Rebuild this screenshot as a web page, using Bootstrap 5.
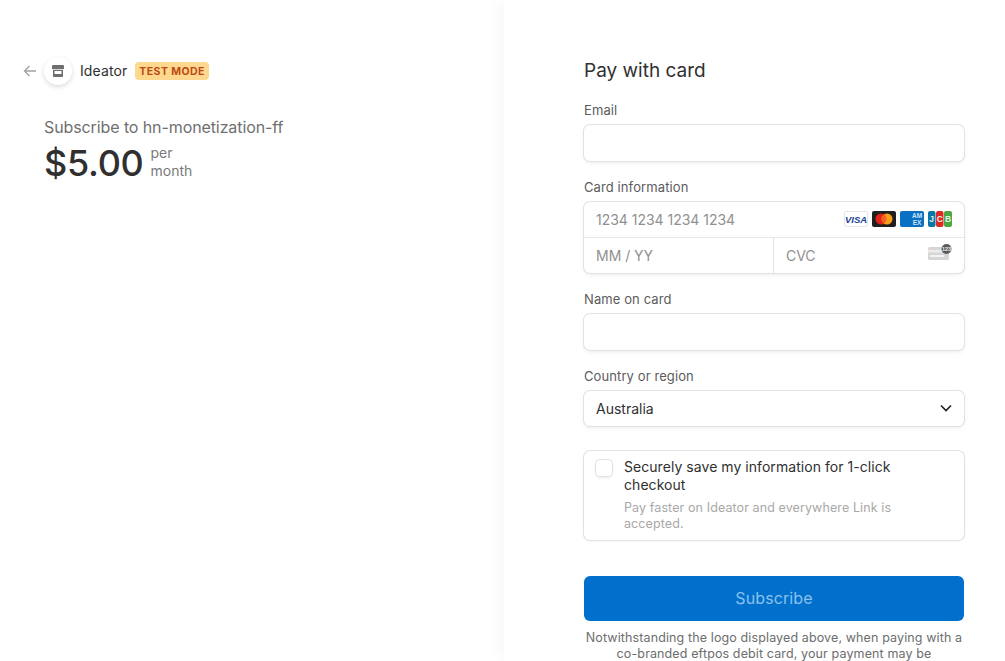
<!DOCTYPE html>
<html lang="en">
<head>
  <meta charset="UTF-8">
  <meta name="viewport" content="width=device-width, initial-scale=1">
  <title>Subscribe to hn-monetization-ff</title>
  <link href="https://cdn.jsdelivr.net/npm/bootstrap@5.3.3/dist/css/bootstrap.min.css" rel="stylesheet">
  <style>
    html, body { height: 100%; }
    body { font-family: Inter, "Liberation Sans", sans-serif; color: #303030; background: #fff; overflow: hidden; }
    .page-wrap { height: 661px; overflow: hidden; }
    .summary-pane { width: 504px; flex: none; padding: 57px 0 0 23px; }
    .form-pane { flex: 1; padding: 59px 41px 0 80px; box-shadow: -10px 0 14px -4px rgba(0,0,0,.035); background: #fff; }
    .back-arrow { width: 14px; height: 14px; margin-right: 7px; }
    .logo-circle { width: 28px; height: 28px; border-radius: 50%; background: #fff; box-shadow: 0 2px 5px rgba(0,0,0,.14); margin-right: 8px; }
    .merchant-name { font-size: 14px; font-weight: 400; letter-spacing: .1px; line-height: 20px; margin-right: 8px; }
    .test-tag { background: #ffd88f; color: #bb4a12; font-size: 10.5px; font-weight: 700; letter-spacing: .45px; line-height: 19px; height: 18px; padding: 0 4px; border-radius: 4px; }
    .plan-block { padding: 32px 0 0 21px; }
    .plan-name { font-size: 16px; font-weight: 400; letter-spacing: -.1px; line-height: 20px; color: #6f6f6f; }
    .plan-row { margin-top: 4px; }
    .plan-price { font-size: 36px; font-weight: 500; line-height: 44px; letter-spacing: -.3px; margin-right: 7px; }
    .plan-term { font-size: 14px; font-weight: 400; line-height: 18px; color: #7a7a7a; margin-bottom: 2px; }
    .form-title { font-size: 19px; font-weight: 400; line-height: 24px; margin: 0 0 19px; }
    .field-label { display: block; font-size: 13px; font-weight: 400; letter-spacing: .1px; line-height: 16px; color: #5c5c5c; margin-bottom: 7px; }
    .field-group { margin-bottom: 18px; }
    .stripe-input { height: 35.67px; width: 100%; background: #fff; border: 0; border-radius: 6px; box-shadow: 0 0 0 1px #e2e2e2, 0 2px 4px rgba(0,0,0,.08); padding: 0 12px; font-size: 14px; color: #303030; display: flex; align-items: center; }
    .card-box { height: 71.33px; border-radius: 6px; box-shadow: 0 0 0 1px #e2e2e2, 0 2px 4px rgba(0,0,0,.08); }
    .card-row { height: 36px; border-bottom: 1px solid #e8e8e8; padding: 0 12px; }
    .card-half { height: 35.33px; padding: 0 12px; width: 50%; }
    .card-half:first-child { width: 189px; flex: none; }
    .card-half + .card-half { border-left: 1px solid #e2e2e2; flex: 1; }
    .hint-text { font-size: 14px; color: #909090; letter-spacing: -.02px; }
    .brand-list { gap: 4px; }
    .brand-list svg { display: block; }
    .cvc-icon { margin-bottom: 5px; }
    .select-chevron { width: 12px; height: 8px; }
    .save-box { height: 89px; margin-top: 24.67px; border-radius: 6px; box-shadow: 0 0 0 1px #e2e2e2, 0 1px 3px rgba(0,0,0,.08); padding: 7px 12px; }
    .fake-check { width: 16px; height: 16px; flex: none; border-radius: 4px; background: #fff; box-shadow: 0 0 0 1px #e2e2e2, 0 2px 3px rgba(0,0,0,.08); margin: 2px 12px 0 0; }
    .save-title { font-size: 14px; font-weight: 400; letter-spacing: .05px; line-height: 18px; color: #303030; }
    .save-desc { font-size: 12.5px; line-height: 16px; color: #a8a8a8; margin-top: 6px; letter-spacing: .1px; }
    .subscribe-btn { display: block; width: 100%; height: 44.67px; margin-top: 36px; background: #0070cc; border: 0; border-radius: 6px; color: #8cc0ee; font-size: 16px; font-weight: 400; letter-spacing: .1px; }
    .legal-text { font-size: 12.5px; line-height: 16px; color: #6d6d6d; text-align: center; margin-top: 9px; letter-spacing: .12px; white-space: nowrap; }
  </style>
</head>
<body>
  <div class="page-wrap d-flex">
    <div class="summary-pane">
      <div class="d-flex align-items-center">
        <svg class="back-arrow" viewBox="0 0 14 14" fill="none" stroke="#a3a3a3" stroke-width="1.4"><path d="M13 7H1.5M6.5 2 1.5 7l5 5"/></svg>
        <div class="logo-circle d-flex align-items-center justify-content-center">
          <svg width="12" height="12" viewBox="0 0 12 12"><path d="M0 1.2C0 .5.5 0 1.2 0h9.6c.7 0 1.2.5 1.2 1.2V4H0z" fill="#6f6f6f"/><path d="M1 4.8h10V11c0 .6-.4 1-1 1H2c-.6 0-1-.4-1-1zM2.5 6v3h7V6z" fill="#6f6f6f" fill-rule="evenodd"/></svg>
        </div>
        <span class="merchant-name">Ideator</span>
        <span class="test-tag">TEST MODE</span>
      </div>
      <div class="plan-block">
        <div class="plan-name">Subscribe to hn-monetization-ff</div>
        <div class="plan-row d-flex align-items-center">
          <span class="plan-price">$5.00</span>
          <span class="plan-term">per<br>month</span>
        </div>
      </div>
    </div>
    <div class="form-pane">
      <h1 class="form-title">Pay with card</h1>

      <div class="field-group">
        <label class="field-label">Email</label>
        <input type="email" class="stripe-input">
      </div>

      <div class="field-group">
        <label class="field-label">Card information</label>
        <div class="card-box">
          <div class="card-row d-flex align-items-center justify-content-between">
            <span class="hint-text">1234 1234 1234 1234</span>
            <div class="brand-list d-flex align-items-center">
              <svg width="24" height="16" viewBox="0 0 24 16"><rect x=".5" y=".5" width="23" height="15" rx="1.5" fill="#fff" stroke="#e6e6e6"/><text x="12" y="11.5" text-anchor="middle" font-family="Liberation Sans" font-size="9.5" font-weight="700" font-style="italic" fill="#1a3f95">VISA</text></svg>
              <svg width="24" height="16" viewBox="0 0 24 16"><rect width="24" height="16" rx="2" fill="#1f1f1f"/><circle cx="9" cy="8" r="5.5" fill="#e2231a"/><circle cx="15" cy="8" r="5.5" fill="#f79e1b"/><path d="M12 3.4a5.500 5.500 0 0 1 0 9.200 5.500 5.500 0 0 1 0-9.200z" fill="#f26122"/></svg>
              <svg width="24" height="16" viewBox="0 0 24 16"><rect width="24" height="16" rx="2" fill="#0a70c4"/><text x="17" y="7.2" text-anchor="middle" font-family="Liberation Sans" font-size="6.500" font-weight="700" fill="#cfe4f6">AM</text><text x="17" y="13.500" text-anchor="middle" font-family="Liberation Sans" font-size="6.500" font-weight="700" fill="#cfe4f6">EX</text></svg>
              <svg width="24" height="16" viewBox="0 0 24 16" font-family="Liberation Sans" font-size="8.500" font-weight="700" fill="#e4f1ea" text-anchor="middle"><rect x="0" width="7.500" height="16" rx="2" fill="#0b74a8"/><rect x="8" width="7.500" height="16" rx="2" fill="#dd2a22"/><rect x="16" width="8" height="16" rx="2" fill="#4aa843"/><text x="3.700" y="11">J</text><text x="11.700" y="11">C</text><text x="20" y="11">B</text></svg>
            </div>
          </div>
          <div class="d-flex">
            <div class="card-half d-flex align-items-center"><span class="hint-text">MM / YY</span></div>
            <div class="card-half d-flex align-items-center justify-content-between">
              <span class="hint-text">CVC</span>
              <svg class="cvc-icon" width="24" height="17" viewBox="0 0 24 17"><rect x="0" y="3" width="21" height="13" rx="1.500" fill="#d6d6d6"/><rect x="0" y="6" width="21" height="2.500" fill="#ececec"/><rect x="2" y="11" width="14" height="2" fill="#f3f3f3"/><circle cx="18.500" cy="5" r="5" fill="#5a5a5a"/><text x="18.500" y="7" text-anchor="middle" font-family="Liberation Sans" font-size="5.500" font-weight="700" fill="#ededed">123</text></svg>
            </div>
          </div>
        </div>
      </div>

      <div class="field-group">
        <label class="field-label">Name on card</label>
        <input type="text" class="stripe-input">
      </div>

      <div>
        <label class="field-label">Country or region</label>
        <div class="stripe-input justify-content-between">
          <span>Australia</span>
          <svg class="select-chevron" viewBox="0 0 12 8" fill="none" stroke="#222" stroke-width="1.600"><path d="M1 1.500 6 6.500l5-5"/></svg>
        </div>
      </div>

      <div class="save-box d-flex">
        <div class="fake-check"></div>
        <div>
          <div class="save-title">Securely save my information for 1-click checkout</div>
          <div class="save-desc">Pay faster on Ideator and everywhere Link is accepted.</div>
        </div>
      </div>

      <button type="button" class="subscribe-btn">Subscribe</button>
      <p class="legal-text">Notwithstanding the logo displayed above, when paying with a<br>co-branded eftpos debit card, your payment may be</p>
    </div>
  </div>
  <script src="https://cdn.jsdelivr.net/npm/bootstrap@5.3.3/dist/js/bootstrap.bundle.min.js"></script>
</body>
</html>
